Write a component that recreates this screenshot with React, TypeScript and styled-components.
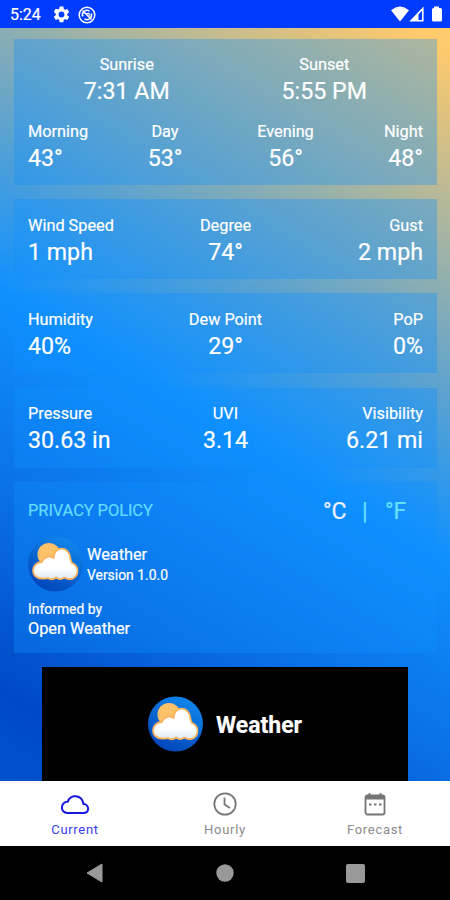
import React from "react";
import styled, { createGlobalStyle } from "styled-components";

const Global = createGlobalStyle`
  * { box-sizing: border-box; }
  body { margin: 0; font-family: Roboto, "Liberation Sans", sans-serif; }
`;
const Phone = styled.div`
  width: 450px; height: 900px; overflow: hidden;
  display: flex; flex-direction: column; background: #000;
`;
const StatusBar = styled.header`
  height: 28px; flex: none; background: #003cff; color: #fff;
  display: flex; align-items: center; padding: 1px 7px 0 10px;
  font-size: 16px; -webkit-text-stroke: 0.2px;
`;
const StatusIcons = styled.div<{ $end?: boolean }>`
  display: flex; align-items: center; gap: ${(p) => (p.$end ? 0 : 8)}px;
  margin-left: ${(p) => (p.$end ? "auto" : "12px")};
`;
const Content = styled.main`
  height: 753px; flex: none; overflow: hidden;
  display: flex; flex-direction: column; gap: 14.2px; padding: 11px 13px 0 14px;
  -webkit-text-stroke: 0.2px;
  background: linear-gradient(31deg, #0052cc 0%, #0049c6 9%, #0a6fe6 28%, #0f90ff 48%, #ffca6b 98%);
`;
const Card = styled.section<{ $height: number; $top?: number }>`
  height: ${(p) => p.$height}px; flex: none; padding: ${(p) => p.$top ?? 14}px 14px 0;
  background: rgba(16, 144, 255, 0.34); color: #fff;
`;
const SunRow = styled.div`
  display: grid; grid-template-columns: 1fr 1fr; height: 67px;
`;
const Row = styled.div<{ $columns: string }>`
  display: grid; grid-template-columns: ${(p) => p.$columns};
`;
const Cell = styled.div<{ $align: string }>`
  text-align: ${(p) => p.$align}; white-space: nowrap;
`;
const Label = styled.div`
  font-size: 16.3px; line-height: 26px;
`;
const Value = styled.div`
  font-size: 23.2px; line-height: 26px;
`;
const InfoTop = styled.div`
  display: flex; justify-content: space-between; height: 30px; line-height: 29px;
`;
const Policy = styled.a`
  color: #62dcff; font-size: 16.5px; letter-spacing: -0.1px;
`;
const Units = styled.div`
  display: flex; width: 100px; line-height: 31px;
`;
const Unit = styled.span<{ $width: number; $plain?: boolean }>`
  width: ${(p) => p.$width}px; color: ${(p) => (p.$plain ? "#eef0ff" : "#68e2ff")};
  font-size: 23px;
`;
const AppInfo = styled.div`
  display: flex; align-items: center; gap: 4px; margin-top: 10px; height: 56px;
`;
const AppText = styled.div`
  padding-top: 3px;
`;
const Name = styled.div`
  font-size: 16.3px; line-height: 20px;
`;
const Small = styled.div`
  font-size: 13.9px; line-height: 20px;
`;
const Credit = styled.div`
  margin-top: 7px;
`;
const Banner = styled.section`
  width: 366px; height: 114px; flex: none; margin-left: 28px; background: #000;
  display: flex; align-items: center; justify-content: center; gap: 13px;
  color: #fff; font-size: 23px; font-weight: 700;
`;
const BannerTitle = styled.span`
  padding-top: 3px;
`;
const Tabs = styled.nav`
  height: 65px; flex: none; background: #fff;
  display: grid; grid-template-columns: repeat(3, 1fr);
`;
const Tab = styled.button<{ $active?: boolean }>`
  border: 0; background: none; padding: 9px 0 0;
  font: 13px/23px Roboto, sans-serif; letter-spacing: 0.7px;
  color: ${(p) => (p.$active ? "#3a3aec" : "#8c8c8c")};
  display: flex; flex-direction: column; align-items: center;
`;
const SystemNav = styled.footer`
  flex: 1; display: flex; align-items: center; justify-content: space-between;
  padding: 0 85px 0 86px;
`;

function Logo({ id }: { id: string }) {
  const cloud =
    "M14 42.500C2 42.500 2 26.500 14 26C16 20.500 22 19.500 25.500 22C26 9 42 9.500 42.500 23C43 25 43 26 44 27C53 31 50 43 42 43C39 43.500 38 42 36.500 41.500C33 44 30 43 28 41.500C25 44 22 43.500 19.500 42C18 43 16 42.500 14 42.500Z";
  return (
    <svg width="55" height="56" viewBox="0 0 55 56">
      <defs>
        <linearGradient id={id + "sky"} x1="0.8" y1="0" x2="0.3" y2="1">
          <stop offset="0" stopColor="#118aef" />
          <stop offset="1" stopColor="#0044b8" />
        </linearGradient>
        <linearGradient id={id + "cloud"} x1="0" y1="0" x2="0" y2="1">
          <stop offset="0.65" stopColor="#fff" />
          <stop offset="1" stopColor="#dceaf5" />
        </linearGradient>
      </defs>
      <circle cx="27.5" cy="28" r="27.5" fill={`url(#${id}sky)`} />
      <circle cx="21" cy="18.5" r="11.5" fill="#ffc268" />
      <path d={cloud} fill={`url(#${id}cloud)`} stroke="#fbb560" strokeWidth="1.8" />
    </svg>
  );
}

function Metric({ label, value, align = "center" }: { label: string; value: string; align?: string }) {
  return (
    <Cell $align={align}>
      <Label>{label}</Label>
      <Value>{value}</Value>
    </Cell>
  );
}

const metrics = [
  [["Wind Speed", "1 mph"], ["Degree", "74°"], ["Gust", "2 mph"]],
  [["Humidity", "40%"], ["Dew Point", "29°"], ["PoP", "0%"]],
  [["Pressure", "30.63 in"], ["UVI", "3.14"], ["Visibility", "6.21 mi"]],
];
const aligns = ["left", "center", "right"];

export default function App() {
  return (
    <Phone>
      <Global />
      <StatusBar>
        <span>5:24</span>
        <StatusIcons>
          <svg width="17" height="17" viewBox="1.500 1.500 21 21" fill="#fff">
            <path d="M19.14 12.94c.04-.3.06-.61.06-.94s-.02-.64-.07-.94l2.03-1.58a.49.49 0 0 0 .12-.61l-1.92-3.32a.49.49 0 0 0-.59-.22l-2.39.96a7 7 0 0 0-1.62-.94l-.36-2.54A.48.48 0 0 0 13.92 2h-3.84a.48.48 0 0 0-.48.41l-.36 2.54c-.59.24-1.13.57-1.62.94l-2.39-.96a.48.48 0 0 0-.59.22L2.72 8.47a.47.47 0 0 0 .12.61l2.03 1.58a7 7 0 0 0 0 2.28l-2.03 1.58a.49.49 0 0 0-.12.61l1.92 3.32c.12.22.37.29.59.22l2.39-.96c.5.38 1.03.7 1.62.94l.36 2.54c.05.24.24.41.48.41h3.84c.24 0 .44-.17.48-.41l.36-2.54c.59-.24 1.13-.56 1.62-.94l2.39.96c.22.08.47 0 .59-.22l1.92-3.32a.47.47 0 0 0-.12-.61zM12 15.6a3.6 3.6 0 1 1 0-7.2 3.6 3.6 0 0 1 0 7.2z" />
          </svg>
          <svg width="18" height="18" viewBox="0 0 18 18" fill="none" stroke="#fff">
            <circle cx="9" cy="9" r="7.8" strokeWidth="1.5" />
            <path d="M4.700 10.500A4.600 4.600 0 0 1 11.500 5.100M13.300 7.500A4.600 4.600 0 0 1 6.500 12.900" strokeWidth="1.6" />
            <path d="M4.500 4.500L13.500 13.500" strokeWidth="1.4" />
            <path d="M8 7.500L11 7.300L11.300 10.200" strokeWidth="1.2" />
          </svg>
        </StatusIcons>
        <StatusIcons $end>
          <svg width="52" height="17" viewBox="0 0 52 17" fill="#fff">
            <path d="M0 4.2Q9-3 18 4.2L9 15.5Z" />
            <path d="M31.8 2.6V14.8H20.2Z" fill="none" stroke="#fff" strokeWidth="1.6" />
            <path d="M27.500 6V15H20Z" />
            <path d="M43 2V0.5H48V2H49.5Q51 2 51 3.5V14Q51 15.5 49.5 15.5H42.5Q41 15.5 41 14V3.5Q41 2 42.5 2Z" />
          </svg>
        </StatusIcons>
      </StatusBar>
      <Content>
        <Card $height={146} $top={13}>
          <SunRow>
            <Metric label="Sunrise" value="7:31 AM" />
            <Metric label="Sunset" value="5:55 PM" />
          </SunRow>
          <Row $columns="97px 80px 161px 57px">
            <Metric label="Morning" value="43°" align="left" />
            <Metric label="Day" value="53°" />
            <Metric label="Evening" value="56°" />
            <Metric label="Night" value="48°" align="right" />
          </Row>
        </Card>
        {metrics.map((row, r) => (
          <Card $height={80} $top={r === 2 ? 13 : 14} key={row[0][0]}>
            <Row $columns="1fr 1fr 1fr">
              {row.map(([label, value], i) => (
                <Metric key={label} label={label} value={value} align={aligns[i]} />
              ))}
            </Row>
          </Card>
        ))}
        <Card $height={171}>
          <InfoTop>
            <Policy>PRIVACY POLICY</Policy>
            <Units>
              <Unit $width={39} $plain>°C</Unit>
              <Unit $width={23}>|</Unit>
              <Unit $width={30}>°F</Unit>
            </Units>
          </InfoTop>
          <AppInfo>
            <Logo id="info" />
            <AppText>
              <Name>Weather</Name>
              <Small>Version 1.0.0</Small>
            </AppText>
          </AppInfo>
          <Credit>
            <Small>Informed by</Small>
            <Name>Open Weather</Name>
          </Credit>
        </Card>
        <Banner>
          <Logo id="banner" />
          <BannerTitle>Weather</BannerTitle>
        </Banner>
      </Content>
      <Tabs>
        <Tab $active>
          <svg width="30" height="28" viewBox="0 0 30 28" fill="none" stroke="#1717e0" strokeWidth="2">
            <path d="M7.5 23H23C30 23 29.500 14.5 23.500 14C22 4 10 4 8 11.500C0 12 0 23 7.500 23Z" />
          </svg>
          Current
        </Tab>
        <Tab>
          <svg width="28" height="28" viewBox="0 0 28 28" fill="none" stroke="#777" strokeWidth="1.8">
            <circle cx="14" cy="14" r="10.700" />
            <path d="M13.500 7.500V14.500L19 18" />
          </svg>
          Hourly
        </Tab>
        <Tab>
          <svg width="28" height="28" viewBox="0 0 28 28" fill="none" stroke="#757575" strokeWidth="1.8">
            <rect x="4.500" y="5.500" width="19" height="19" rx="2" />
            <path d="M4.500 7.500H23.500" strokeWidth="4" />
            <path d="M8.500 3V7M19.500 3V7" />
            <path d="M8 14.500H10.500M13 14.500H15.500M18 14.500H20.500" />
          </svg>
          Forecast
        </Tab>
      </Tabs>
      <SystemNav>
        <svg width="18" height="20" viewBox="0 0 18 20"><path d="M1 10L16 1V19Z" fill="#999" stroke="#999" strokeLinejoin="round" /></svg>
        <svg width="18" height="18" viewBox="0 0 18 18"><circle cx="9" cy="9" r="8.700" fill="#999" /></svg>
        <svg width="19" height="19" viewBox="0 0 19 19"><rect width="19" height="19" rx="2" fill="#999" /></svg>
      </SystemNav>
    </Phone>
  );
}
